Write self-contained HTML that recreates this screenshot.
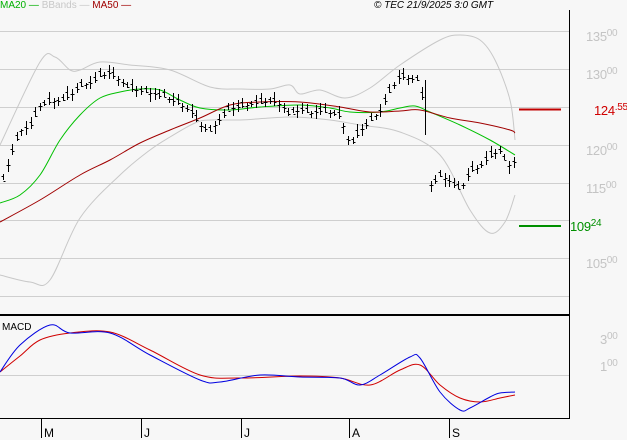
<!DOCTYPE html><html><head><style>
body{margin:0;width:627px;height:440px;background:#f7f7f7;overflow:hidden;font-family:"Liberation Sans",sans-serif}
svg{position:absolute;left:0;top:0}
.ax{position:absolute;left:586px;color:#c4c4c4;font-size:13px;letter-spacing:-0.3px}
.ax small{font-size:10px;vertical-align:top;position:relative;top:-1px}
</style></head><body>
<svg width="627" height="440" id="s">
<g stroke="#cfcfcf" stroke-width="1">
<line x1="0" x2="569" y1="31.5" y2="31.5"/><line x1="0" x2="569" y1="69.5" y2="69.5"/><line x1="0" x2="569" y1="107.5" y2="107.5"/><line x1="0" x2="569" y1="145.5" y2="145.5"/><line x1="0" x2="569" y1="183.5" y2="183.5"/><line x1="0" x2="569" y1="220.5" y2="220.5"/><line x1="0" x2="569" y1="258.5" y2="258.5"/><line x1="0" x2="569" y1="296.5" y2="296.5"/><line x1="0" x2="569" y1="375.5" y2="375.5"/>
</g>
<polyline class="sm" fill="none" stroke="#c8c8c8" points="0,145 40,62 55,57 70,70 80,70 100,62 130,65 170,70 210,87 240,89 270,89 290,85 300,94 320,90 345,98 370,88 400,65 440,40 460,35 480,40 495,60 510,100 515,140"/>
<polyline class="sm" fill="none" stroke="#c8c8c8" points="0,275 30,282 50,280 80,218 120,175 150,150 170,137 195,123 210,120 240,120 270,118 295,117 330,120 360,125 400,132 440,155 470,210 490,233 505,222 515,195"/>
<polyline class="sm" fill="none" stroke="#00c000" points="0,203 20,195 40,175 60,140 80,115 100,98 120,92 140,89 160,90 180,100 200,108 230,110 260,107 300,105 330,108 350,112 380,112 400,108 415,106 430,112 460,125 490,140 515,155"/>
<polyline class="sm" fill="none" stroke="#a00000" points="0,222 40,200 80,175 110,160 140,143 170,130 200,118 230,105 260,102 300,102 340,107 370,112 400,111 420,110 450,118 480,123 510,130 515,133"/>
<g id="bars" stroke="#000" stroke-width="1"></g>
<line x1="519" x2="561" y1="109.5" y2="109.5" stroke="#c00000" stroke-width="2"/>
<line x1="519" x2="561" y1="226" y2="226" stroke="#009000" stroke-width="2"/>
<polyline class="sm" fill="none" stroke="#d00000" points="0,372 20,356 40,340 70,333 110,332 150,350 200,375 240,378 300,376 340,378 370,385 400,370 420,365 440,385 460,398 480,402 500,398 515,395"/>
<polyline class="sm" fill="none" stroke="#0000e0" points="0,372 20,345 50,325 70,333 110,333 150,355 200,380 220,382 260,375 300,377 340,378 360,385 380,375 410,357 420,358 440,392 460,410 470,408 490,397 500,393 515,392"/>
<line x1="569.5" y1="10" x2="569.5" y2="419" stroke="#000"/>
<line x1="0" y1="315" x2="570" y2="315" stroke="#000" stroke-width="2"/>
<line x1="0" y1="418.5" x2="570" y2="418.5" stroke="#000"/>
<g stroke="#000"><line x1="41.5" x2="41.5" y1="418" y2="438"/><line x1="141.5" x2="141.5" y1="418" y2="438"/><line x1="241.5" x2="241.5" y1="418" y2="438"/><line x1="349.5" x2="349.5" y1="418" y2="438"/><line x1="449.5" x2="449.5" y1="418" y2="438"/></g>
<g font-family="Liberation Sans" font-size="12" fill="#000"><text x="44" y="437">M</text><text x="144" y="437">J</text><text x="244" y="437">J</text><text x="352" y="437">A</text><text x="452" y="437">S</text></g>
<text x="2" y="330" font-size="10" font-family="Liberation Sans">MACD</text>
</svg>
<div style="position:absolute;left:0;top:0;font-size:10px;"><span style="color:#00b000">MA20 —</span> <span style="color:#c8c8c8">BBands —</span> <span style="color:#a00000">MA50 —</span></div>
<div style="position:absolute;left:374px;top:0;font-size:10px;font-style:italic;color:#000">© TEC 21/9/2025 3:0 GMT</div>
<div class="ax" style="top:29px">135<small>00</small></div>
<div class="ax" style="top:67px">130<small>00</small></div>
<div class="ax" style="top:143px">120<small>00</small></div>
<div class="ax" style="top:181px">115<small>00</small></div>
<div class="ax" style="top:256px">105<small>00</small></div>
<div class="ax" style="top:332px;left:600px">3<small>00</small></div>
<div class="ax" style="top:359px;left:600px">1<small>00</small></div>
<div class="ax" style="top:103px;left:594px;color:#d00000;background:#f7f7f7">124<small>.55</small></div>
<div class="ax" style="top:219px;left:570px;color:#009000">109<small>24</small></div>
<script>
var p=[[3,180],[10,155],[20,130],[30,125],[40,105],[50,100],[60,100],[70,95],[80,85],[90,82],[100,75],[110,72],[120,80],[130,88],[140,90],[150,92],[160,95],[170,98],[180,103],[190,110],[200,125],[210,130],[220,118],[230,108],[240,105],[250,103],[260,102],[270,100],[280,103],[290,115],[300,108],[310,112],[320,110],[330,112],[340,115],[350,145],[360,130],[370,120],[380,110],[390,90],[400,75],[410,77],[420,80],[425,130],[430,185],[440,175],[450,180],[460,190],[470,170],[480,165],[490,155],[500,150],[505,160],[510,165],[515,160]];
function y(x){for(var i=0;i<p.length-1;i++){if(x<=p[i+1][0]){var t=(x-p[i][0])/(p[i+1][0]-p[i][0]);return p[i][1]+t*(p[i+1][1]-p[i][1]);}}return p[p.length-1][1];}
var s="",k=0;
for(var x=3;x<=515;x+=4.6){if(x>422&&x<428)continue;var c=y(x),h=6+((k*7)%9),o=((k*5)%7)-3;k++;var X=Math.round(x)+.5;
s+='<line x1="'+X+'" x2="'+X+'" y1="'+(c-h/2+o).toFixed(0)+'" y2="'+(c+h/2+o).toFixed(0)+'"/><line x1="'+(X-2)+'" x2="'+X+'" y1="'+(c+o-1).toFixed(0)+'.5" y2="'+(c+o-1).toFixed(0)+'.5"/><line x1="'+X+'" x2="'+(X+2)+'" y1="'+(c+1).toFixed(0)+'.5" y2="'+(c+1).toFixed(0)+'.5"/>';}
s+='<line x1="425.5" x2="425.5" y1="80" y2="135"/>';
document.getElementById("bars").innerHTML=s;
var ps=document.querySelectorAll("polyline.sm");
for(var j=0;j<ps.length;j++){var pl=ps[j];var pts=pl.getAttribute("points").trim().split(/\s+/).map(function(q){return q.split(",").map(Number)});
var d="M"+pts[0][0]+","+pts[0][1];
for(var i=0;i<pts.length-1;i++){var p0=pts[i-1]||pts[i],p1=pts[i],p2=pts[i+1],p3=pts[i+2]||p2;
d+=" C"+(p1[0]+(p2[0]-p0[0])/6).toFixed(1)+","+(p1[1]+(p2[1]-p0[1])/6).toFixed(1)+" "+(p2[0]-(p3[0]-p1[0])/6).toFixed(1)+","+(p2[1]-(p3[1]-p1[1])/6).toFixed(1)+" "+p2[0]+","+p2[1];}
var pa=document.createElementNS("http://www.w3.org/2000/svg","path");pa.setAttribute("d",d);pa.setAttribute("fill","none");pa.setAttribute("stroke",pl.getAttribute("stroke"));pl.parentNode.replaceChild(pa,pl);}
</script>
</body></html>
